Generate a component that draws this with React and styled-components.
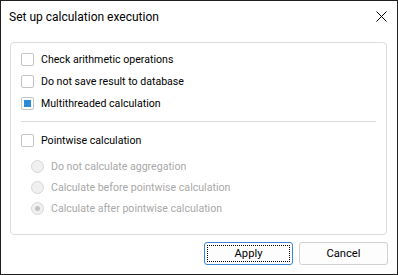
import styled, { createGlobalStyle } from "styled-components";

const GlobalStyle = createGlobalStyle`
  body {
    margin: 0;
    font-family: Roboto, "Open Sans", sans-serif;
    font-size: 10.6px;
    color: #000;
  }
`;

const Window = styled.div`
  width: 398px;
  height: 275px;
  box-sizing: border-box;
  border: 1px solid #1f1f1f;
  background: #fff;
  display: flex;
  flex-direction: column;
`;

const TitleBar = styled.div`
  height: 31px;
  display: flex;
  align-items: center;
  justify-content: space-between;
  padding: 0 9px 0 8px;
`;

const Title = styled.span`
  font-size: 12px;
`;

const Close = styled.svg`
  width: 11px;
  height: 11px;
  margin-right: 1px;
`;

const Body = styled.div`
  padding: 10px 10px 0 9px;
`;

const Panel = styled.div`
  border: 1px solid #dcdcdc;
  border-radius: 4px;
  padding: 5px 10px 15px 10px;
`;

const Row = styled.label`
  height: ${(p) => (p.$radio ? 21 : 22)}px;
  display: flex;
  align-items: center;
  gap: 7px;
  padding-left: ${(p) => (p.$radio ? 10 : 0)}px;
  color: ${(p) => (p.$disabled ? "#a8a8a8" : "#000")};
`;

const Box = styled.span`
  width: 11px;
  height: 11px;
  border: 1px solid #c4c4c4;
  border-radius: 2px;
  background: #fff;
  display: flex;
  align-items: center;
  justify-content: center;

  &::after {
    content: "";
    display: ${(p) => (p.$checked ? "block" : "none")};
    width: 7px;
    height: 7px;
    background: #2b8ad6;
  }
`;

const Radio = styled.span`
  width: 11px;
  height: 11px;
  border: 1px solid #d6d6d6;
  border-radius: 50%;
  background: #f0f0f0;
  display: flex;
  align-items: center;
  justify-content: center;

  &::after {
    content: "";
    display: ${(p) => (p.$checked ? "block" : "none")};
    width: 5px;
    height: 5px;
    border-radius: 50%;
    background: #c2c2c2;
  }
`;

const Separator = styled.div`
  height: 1px;
  background: #d9d9d9;
  margin: 7px 0;
`;

const RadioGroup = styled.div`
  margin-top: 5px;
`;

const Footer = styled.div`
  display: flex;
  justify-content: flex-end;
  gap: 6px;
  padding: 7px 9px 0 0;
`;

const Button = styled.button`
  position: relative;
  width: 89px;
  height: 23px;
  font-family: inherit;
  font-size: 11.2px;
  color: #000;
  background: #fdfdfd;
  border: 1px solid ${(p) => (p.$default ? "#3a86d4" : "#d0d0d0")};
  border-radius: 3px;
  padding: 0;

  &::after {
    content: "";
    display: ${(p) => (p.$default ? "block" : "none")};
    position: absolute;
    inset: 2px;
    border: 1px dotted #000;
  }
`;

const Check = ({ checked, children }) => (
  <Row>
    <Box $checked={checked} />
    {children}
  </Row>
);

const Option = ({ checked, children }) => (
  <Row $radio $disabled>
    <Radio $checked={checked} />
    {children}
  </Row>
);

const App = () => {
  return (
    <Window>
      <GlobalStyle />
      <TitleBar>
        <Title>Set up calculation execution</Title>
        <Close viewBox="0 0 11 11">
          <path d="M0.5 0.5 L10.5 10.5 M10.5 0.5 L0.5 10.5" stroke="#000" strokeWidth="1" />
        </Close>
      </TitleBar>
      <Body>
        <Panel>
          <Check>Check arithmetic operations</Check>
          <Check>Do not save result to database</Check>
          <Check checked>Multithreaded calculation</Check>
          <Separator />
          <Check>Pointwise calculation</Check>
          <RadioGroup>
            <Option>Do not calculate aggregation</Option>
            <Option>Calculate before pointwise calculation</Option>
            <Option checked>Calculate after pointwise calculation</Option>
          </RadioGroup>
        </Panel>
      </Body>
      <Footer>
        <Button $default>Apply</Button>
        <Button>Cancel</Button>
      </Footer>
    </Window>
  );
};

export default App;
